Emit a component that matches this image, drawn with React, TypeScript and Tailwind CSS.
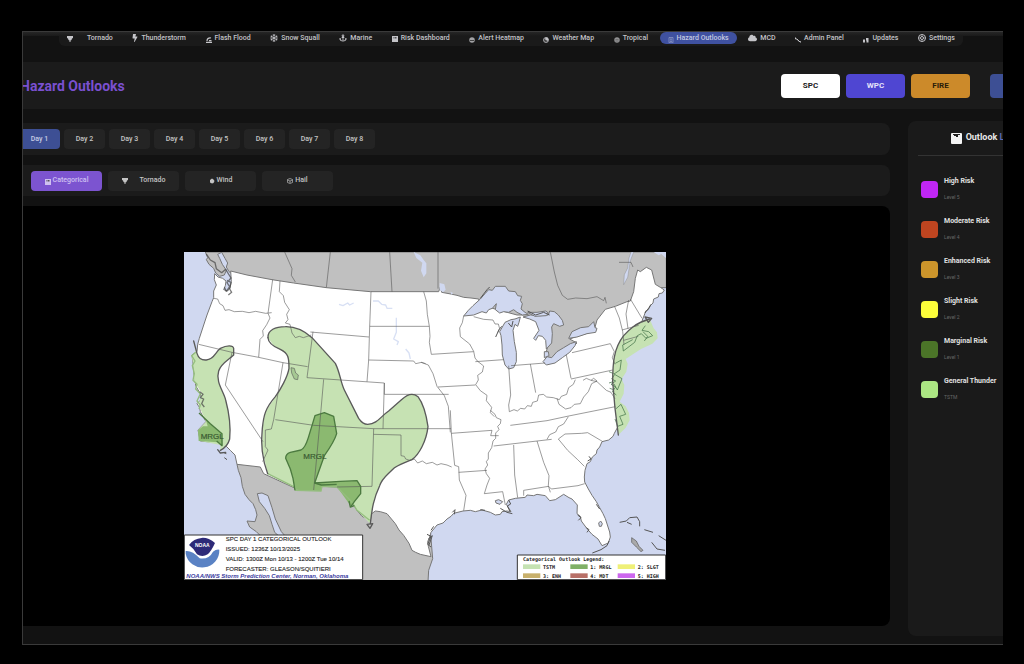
import React from 'react'
import { BsTornado } from 'react-icons/bs'
import { FaAnchor, FaBolt, FaCloud, FaRegSnowflake } from 'react-icons/fa'

type IconName =
  | 'tornado' | 'bolt' | 'flood' | 'snow' | 'anchor' | 'chart' | 'heat' | 'globe'
  | 'tropical' | 'list' | 'cloud' | 'wrench' | 'updates' | 'gear' | 'wind' | 'hail'

function Icon({ name }: { name: IconName }) {
  switch (name) {
    case 'bolt':
      return <FaBolt className="w-[6px] h-[8px]" />
    case 'snow':
      return <FaRegSnowflake className="w-2 h-2" />
    case 'anchor':
      return <FaAnchor className="w-2 h-2" />
    case 'cloud':
      return <FaCloud className="w-[9px] h-2" />
    case 'gear':
      return (
        <svg viewBox="0 0 16 16" className="w-2 h-2" fill="none" stroke="currentColor" strokeWidth="2">
          <circle cx="8" cy="8" r="7" />
          <circle cx="8" cy="8" r="3" />
          <path d="M8 1v4M8 11v4M1 8h4M11 8h4" strokeWidth="1" />
        </svg>
      )
    case 'tornado':
      return (
        <svg viewBox="0 0 12 12" className="w-[6px] h-[6px] mt-px" fill="currentColor">
          <path d="M0 0h12v4l-2 1-1 3-2 1v3H5V9L3 8 2 5 0 4z" />
        </svg>
      )
    case 'flood':
      return (
        <svg viewBox="0 0 12 12" className="w-[6px] h-[6px] mt-[3px]" fill="none" stroke="currentColor" strokeWidth="2.500">
          <path d="M0 10.500h12M2 8c0-5 4-7 8-6M6 7h5" />
        </svg>
      )
    case 'chart':
      return (
        <svg viewBox="0 0 12 12" className="w-[6px] h-[6px] mt-[2px]">
          <path d="M0 0h12v12H0z" fill="currentColor" />
          <path d="M3 2h2v3H3zM6 2h3v3H6z" fill="#333" opacity="0.8" />
        </svg>
      )
    case 'heat':
      return (
        <svg viewBox="0 0 12 12" className="w-[6px] h-[6px] mt-[3px]">
          <circle cx="6" cy="6" r="5.500" fill="currentColor" opacity="0.8" />
          <path d="M2 7h8" stroke="#222" strokeWidth="1.500" />
        </svg>
      )
    case 'globe':
      return (
        <svg viewBox="0 0 12 12" className="w-[6px] h-[6px] mt-[3px]">
          <circle cx="6" cy="6" r="5" fill="#444" stroke="currentColor" strokeWidth="1.500" />
          <path d="M5 1h4l2 4-3 4-1-3-3-1z" fill="currentColor" />
        </svg>
      )
    case 'tropical':
      return (
        <svg viewBox="0 0 12 12" className="w-[6px] h-[6px] mt-[3px]">
          <circle cx="6" cy="6" r="5.500" fill="currentColor" opacity="0.7" />
          <path d="M3 5h6M3 8h6" stroke="#555" />
        </svg>
      )
    case 'list':
      return (
        <svg viewBox="0 0 12 12" className="w-[6px] h-[6px] mt-[3px]" fill="none" stroke="currentColor" opacity="0.7">
          <path d="M2 1h8v10.500H2zM4 4h4M4 6h4M4 9h4" strokeWidth="1.300" />
        </svg>
      )
    case 'wrench':
      return (
        <svg viewBox="0 0 12 12" className="w-[6px] h-[6px] mt-[3px]" fill="none" stroke="currentColor" strokeWidth="2">
          <path d="M1 1v3h3l4 5h3v2M4 4l5 5" />
        </svg>
      )
    case 'updates':
      return (
        <svg viewBox="0 0 12 12" className="w-[6px] h-[6px] mt-[3px]" fill="currentColor">
          <path d="M0 5h4v6H0zM6 2h5v9H7V7H6z" />
        </svg>
      )
    case 'wind':
      return (
        <svg viewBox="0 0 12 12" className="w-[6px] h-[6px] mt-px" fill="currentColor">
          <path d="M6 1l3 2 2 3-2 4-3 1-4-2V4z" />
        </svg>
      )
    case 'hail':
      return (
        <svg viewBox="0 0 12 12" className="w-[6px] h-[6px] mt-px" fill="none" stroke="currentColor" strokeWidth="1.300">
          <path d="M1 3l5-2 5 2v6l-5 2-5-2zM1 4l5 2 5-2M6 6v4" />
        </svg>
      )
    default:
      return <BsTornado className="w-2 h-2" />
  }
}

const navItems: { label: string; icon: IconName; wide?: boolean; active?: boolean }[] = [
  { label: 'Tornado', icon: 'tornado', wide: true },
  { label: 'Thunderstorm', icon: 'bolt' },
  { label: 'Flash Flood', icon: 'flood' },
  { label: 'Snow Squall', icon: 'snow' },
  { label: 'Marine', icon: 'anchor' },
  { label: 'Risk Dashboard', icon: 'chart' },
  { label: 'Alert Heatmap', icon: 'heat' },
  { label: 'Weather Map', icon: 'globe' },
  { label: 'Tropical', icon: 'tropical' },
  { label: 'Hazard Outlooks', icon: 'list', active: true },
  { label: 'MCD', icon: 'cloud' },
  { label: 'Admin Panel', icon: 'wrench' },
  { label: 'Updates', icon: 'updates' },
  { label: 'Settings', icon: 'gear' },
]

const days = ['Day 1', 'Day 2', 'Day 3', 'Day 4', 'Day 5', 'Day 6', 'Day 7', 'Day 8']

const categories: { label: string; icon: IconName; wide?: boolean }[] = [
  { label: 'Categorical', icon: 'chart' },
  { label: 'Tornado', icon: 'tornado', wide: true },
  { label: 'Wind', icon: 'wind' },
  { label: 'Hail', icon: 'hail' },
]

const risks = [
  { name: 'High Risk', level: 'Level 5', color: 'bg-[#c026f5]' },
  { name: 'Moderate Risk', level: 'Level 4', color: 'bg-[#bf4520]' },
  { name: 'Enhanced Risk', level: 'Level 3', color: 'bg-[#cc952b]' },
  { name: 'Slight Risk', level: 'Level 2', color: 'bg-[#fbfd3a]' },
  { name: 'Marginal Risk', level: 'Level 1', color: 'bg-[#4b7528]' },
  { name: 'General Thunder', level: 'TSTM', color: 'bg-[#ace683]' },
]

const mapLegend = [
  { x: 1028, y: 948, label: 'TSTM', color: '#c5e2b2' },
  { x: 1170, y: 948, label: '1: MRGL', color: '#80b066' },
  { x: 1312, y: 948, label: '2: SLGT', color: '#eff078' },
  { x: 1028, y: 975, label: '3: ENH', color: '#c8b06c' },
  { x: 1170, y: 975, label: '4: MDT', color: '#b87068' },
  { x: 1312, y: 975, label: '5: HIGH', color: '#cc66ee' },
]

const canada =
  'M75 11L82 28 78 34 86 48 100 60 106 74 118 84 132 80 138 66 126 48 118 30 112 18 124 12 134 30 142 44 138 56 146 70 154 76 200 130 900 260 1098 350 1200 320 1300 260 1350 170 1440 118 1458 118V11z'

const mexico =
  'M170 648l4 18 8 22 4 26 8 24 12 16 12 12 8 18 4 16-6 20-24-2 8 18 20 14 12 12 5 30h68l-14-26-16-14-8-24-8-26-14-22-16-20-6-24 14-2 18 8 12 36 10 34 18 38 16 18 20 12 6 120h398l2-34 12-35-12-145-180-80-160-60z'

const usa =
  'M103 76L113 86 127 90 137 98 135 112 130 124 142 128 149 118 153 100 151 68 200 80 275 94 340 104 438 118 570 130 775 130 780 116 784 132 806 136 830 141 850 147 872 149 895 152 900 170 1010 200 1040 200 1058 208 1095 225 1108 270 1098 310 1098 335 1130 325 1170 300 1190 284 1168 272 1190 264 1230 252 1242 245 1250 215 1275 183 1305 174 1340 160 1350 158 1360 130 1365 90 1372 65 1380 70 1398 57 1414 65 1425 108 1440 117 1452 125 1446 134 1436 136 1434 146 1420 152 1418 164 1410 172 1404 184 1396 188 1392 200 1386 215 1384 230 1390 245 1405 243 1400 262 1385 268 1370 275 1350 285 1380 284 1345 305 1325 318 1320 345 1310 375 1302 370 1316 400 1308 420 1312 440 1308 460 1314 485 1320 506 1328 520 1310 540 1302 555 1298 564 1285 575 1265 580 1258 596 1250 605 1248 616 1236 626 1230 640 1220 646 1214 666 1212 686 1213 701 1224 722 1235 741 1248 760 1258 778 1268 796 1275 811 1288 851 1290 866 1284 884 1265 892 1253 872 1235 858 1220 841 1203 818 1200 804 1190 796 1191 770 1175 752 1166 748 1150 738 1125 754 1108 757 1095 742 1070 738 1060 742 1040 740 1035 747 1005 750 985 755 978 768 992 790 980 788 965 790 960 798 945 800 930 792 905 785 885 790 870 786 848 788 820 795 812 804 800 812 788 824 770 830 752 852 748 866 742 880 744 894 752 925 720 918 706 912 695 906 686 885 670 861 656 845 645 826 620 796 600 790 585 788 574 796 570 816 545 804 530 786 515 761 492 738 470 716 425 714 420 726 345 720 250 676 240 656 170 648 164 620 150 606 138 594 118 584 60 578 53 545 77 520 60 490 58 478 50 466 64 452 60 436 46 412 45 400 40 372 38 345 35 320 50 310 52 288 57 270 75 215 80 200 95 160 100 148 100 128 108 110 102 94z'

const stateLines =
  'M100 150l12 2 6 14 10 6 6 14 12-2 16 6 24-1 20 4 20-4 30 6 18-2M277 94l-14 101 6 14-10 20-12 18 2 16-10 10-4 54M299 98l-2 32 12 12 4 20 14 22-8 14 4 16-8 10 14 4 6 26 10 14 12-4 12 4 24-8M55 288l100 24 80 15 73 16 74 12M390 251l176 15M398 250l-18 138 232 16v34h193M572 130l-4 105-3 100-5 65M568 234h179M565 335l135 3 6 8 18-4 12 4M730 130l8 28 3 40 6 36 2 30-2 18 6 36 127-8M722 342l22 8 14 26 12 38 22 28 12 32 6 78M773 416l112-6M850 203l-4 20-8 16 2 26 28 22 12 22 4 20 8 10 18 14-4 18-14 10 2 14-8 14 14 18 20 14-2 16 16 20-4 16 12 12M885 340l84-6M880 205l30 8 28 2 6 12 10 0 4 14-6 12M985 352l6 88-6 30 2 20M992 352l102-8M1050 347l16 86M1158 320l14 70M1175 313l115-27 12 24-6 18 8 20M1172 392l125-27M987 490l14-6 10 4 10-8 12 2 8-10 12 2 4-12 14-4 4-18 14-2 10 8 20 2 18 6 6-10 16-6 6-20 14-10 6-14M1130 450l6 18 20 14 16-4 10-10 18-2 10-20 14-16 10-24 16-8-10-8-8 6-14-6-10 6M1232 396l18 4 28 26 14 6 12 20M990 531l110-14 65-14 140-28M940 593l174-20M1100 573l8-14 18-8 8-16 16-8 14-22M1134 572l20-15 50-2 18-2 44 26M1134 572l28 34 30 28 20 20M930 486l14 12 4 10 14 6-2 12-8 8 4 10-10 10 0 16-8 8-4 20-10 16 0 18-6 8 4 10-8 12 4 14 10 14-8 20-8 26M912 736l55-6 8 40M810 486l3 68 10 97 12 4 2 40 20 46-7 46M813 555l122-9-4 16h24M835 672l85-6M1000 590l3 90 9 68M1070 578l20 64 16 40-2 30 6 20M1030 742v-16l75-12 8 8 80-10 20-6M720 541h92M285 514l115 17 180 10h140M308 343l-28 171-7 28-18 3v50l8 10-16 35M155 312l-20 98 113 170M430 393l-12 137-18 195M612 404l-4 137M580 541l-5 173-105 2M580 558l82 2v62l10 2 4 8 12 4 14-4 10 12 14-6 12 8 18-4 14 8 12-4 18 4 14 6M1303 175l14 34 10 40 4 40M1345 155l-8 42 6 44M1350 152l35 58M1325 245l50-14M1330 276l44-12'

const foreignLines =
  'M313 11l22 50-2 20 12 20M450 11l-12 107M628 11l7 119M773 11v110M1110 11l12 60 10 40 14 30 16 12 24-4 34 2 30-6 20 12 4-10 4 18M1316 42h36l6 14'

const bigStorm =
  'M263 268C262 245 285 235 315 235C350 234 375 250 395 268L465 345C480 375 480 400 492 425L535 510C545 525 552 528 562 528C592 526 600 505 625 488L665 453C685 434 700 435 713 445C728 465 738 500 743 535C738 580 715 620 695 634C670 645 650 650 636 664C615 685 605 690 598 712C580 750 575 780 570 826'

const bigStormWest =
  'M263 268C264 285 280 295 300 303C325 315 326 330 326 360C322 385 300 425 285 445C255 480 250 500 246 540C240 590 245 630 262 676'

const westStorm =
  'M40 278L50 315C55 332 65 336 78 335C100 333 103 315 120 300C140 290 158 290 160 300V320C145 335 122 345 115 368C105 400 130 430 136 455C148 500 152 530 148 572Q142 595 120 606'

const eastStorm = 'M1408 212C1365 224 1345 245 1330 262C1300 300 1297 345 1297 400L1304 480 1314 560'

const marginal =
  'M344 726L338 690 330 662 316 630Q316 616 330 612L362 605Q374 600 384 568L404 502 432 493 460 504 469 556Q462 580 432 622L403 704 480 699 530 697 541 714V736L522 760 512 774'

function OutlookMap() {
  return (
    <svg
      viewBox="11 11 1446 984"
      className="w-[482px] h-[328px] shrink-0"
      role="img"
      aria-label="Day 1 outlook"
      strokeLinejoin="round"
    >
      <rect x="11" y="11" width="1446" height="984" fill="#d0d8f0" />
      <g stroke="#777" strokeWidth="3">
        <path d={canada} fill="#c0c0c0" />
        <path d={mexico} fill="#c0c0c0" />
        <path d={usa} fill="#fff" />
      </g>

      {/* lakes and inland water */}
      <g fill="#d0d8f0" stroke="#777" strokeWidth="3">
        <path d="M850 203L864 186 878 172 900 152 914 136 925 124 936 126 945 114 975 114 985 128 1005 130 1012 142 1024 144 1020 156 1026 166 1022 182 1034 192 1044 198 1026 200 1010 192 1000 184 985 192 970 190 958 194 945 184 948 166 936 180 925 184 918 194 905 190 880 200z" />
        <path d="M962 262L958 250 966 236 974 222 992 214 1004 212 1020 206 1016 222 1012 234 1004 228 998 246 1002 280 1008 312 1008 340 1000 358 985 362 974 350 966 320 965 290z" />
        <path d="M1028 206L1050 200 1080 202 1104 200 1108 188 1122 190 1134 200 1146 216 1150 230 1138 234 1120 226 1114 236 1116 256 1114 284 1098 302 1096 276 1086 264 1074 262 1066 276 1060 270 1076 246 1066 220 1048 212z" />
        <path d="M1042 192L1070 192 1096 188 1104 194 1098 202 1064 204z" />
        <path d="M1088 340L1100 325 1114 328 1130 310 1150 298 1170 286 1188 280 1184 292 1168 312 1146 328 1124 344 1098 350z" />
        <path d="M1165 270L1175 250 1201 238 1225 235 1240 220 1244 238 1250 240 1246 252 1220 256 1190 266z" />
        <path d="M1092 310l12 0 2 12-14 6z" />
        <path d="M1360 11l-10 26-8 50-12 22 2-30 10-20 4-30 6-18z" strokeWidth="1" />
        <path d="M700 11l20 10 10 14 8 10v30l-8 12-8-20 4-24-18-14z" stroke="none" />
        <path d="M778 104l14 4 4 16-8 8-10-8zM810 130l8 4-4 6z" stroke="none" />
        <path d="M1255 824l6-6 5 8-3 8h-6zM945 757l10-3 12 6-8 8-12-4z" />
        <path d="M1420 11l15 10 8-4 14 12V11z" stroke="none" />
      </g>
      <path
        d="M476 168l12 4 14-8 6 6 12-6M578 158h16l10 10 12 2 4 10 16 0M648 208v44l-8 20 14 8-4 10M676 302l10 12 4 18"
        fill="none" stroke="#d8e0f4" strokeWidth="4"
      />

      {/* outlook areas */}
      <g fill="#c6e2b3">
        <path d={bigStorm + 'L530 786 515 761 470 716 425 714 420 726 345 718 262 676L245 600 247 535 255 490 300 425 325 370 325 335 318 316 280 292z'} />
        <path d={westStorm + 'L120 590 60 578 53 545 77 520 55 470 64 435 42 400 38 345 34 322 46 312z'} />
        <path d={eastStorm + 'L1336 538 1348 516 1346 494 1336 474 1318 460 1330 436 1332 410 1324 392 1338 370 1342 346 1336 332 1360 316 1382 302 1416 286 1432 270 1430 252 1420 240z'} />
      </g>
      <g fill="#8bb970">
        <path d={marginal + 'L470 716 425 714 422 728 345 724z'} />
        <path d="M60 496L90 526 125 556 127 592 112 582 55 578 53 546 68 534 82 534 76 512z" />
      </g>
      <path
        d="M262 676l84 42 0 8 76 2 3-14 45 2 45 45 15 25 38 30M46 312l-12 10 10 16-8 14 6 24-4 20 12 12-4 14 14 14-10 22 10 12-4 12"
        fill="none" stroke="#94bd7e" strokeWidth="4"
      />

      <g fill="none" stroke="#555" strokeOpacity="0.7" strokeWidth="2.500">
        <path d={stateLines} />
        <path d={foreignLines} />
        <path d="M332 358l10 2 4 14 8 6-2 14-10-2-8-18z" fill="#a6c893" />
        <path d="M58 430l10 8-8 10 10 4-6 14 8 10M78 17l12 18 14 8 4 18 16 12 12-10 16 26-12 14 8 12-10 14-6-12M140 96l12 6-4 20 6 10-10 8" stroke="#444" strokeWidth="4" />
        <path d="M1395 232l-10 14 20 4 12 12-20 8-14-14-12 6-8 20-34 26-2-18 30-16M1388 250l14 14-10 14M1302 380l-8 12 12 6-14 10 14 8-10 14 12 10M1305 345l18-10-4 30-18 12 24 14-14 34-10-18M1306 482l16-14 14 30-18 6 10 24-16 6-8-22M1300 376l-14-6M1298 400l-12 4M1300 424l-12-4" stroke="#3f6f45" strokeWidth="3" />
      </g>
      <g fill="none" stroke="#555" strokeWidth="5">
        <path d="M985 755l6 12-10 6 8 16M960 780l20 12 16 4M900 784l14 2M816 792l8-8-2 14M752 846l8-12M744 872l12-10-10 28M1192 800l10 8-8 8M1218 838l8 6-6 8M1248 768l10 14M1236 914l26-10 18-12 6-14M1222 638l10-6-6-8M1394 194l12-16 6-10M900 150l20-26 8-8M946 266l10-22 8-10M984 224l10 12 4-18M1042 188l24 12 24-8 18 8" strokeWidth="3" />
        <path d="M740 858l12 6-10 24 10 8M1318 822l20-4 10-10 22-2 8 14v14M1340 822l14 6M1392 844l26 8M1414 882l16 20 24 4M1435 862l22 14M128 612l10 4M132 628l8 6" strokeWidth="3" />
        <path d="M1354 868l14 10 8 16 12 12-6 4-14-14-14-14z" fill="#aaa" strokeWidth="2" />
      </g>

      {/* risk contours with arrow ends */}
      <g fill="none" stroke="#5a5a5a" strokeWidth="4" strokeLinecap="round">
        <path d={bigStorm} />
        <path d={bigStormWest} />
        <path d={westStorm} />
        <path d={eastStorm} />
        <path d="M560 828l9 12 8-14zM112 604l8 10 16-2M1394 206l20 4-10 12z" />
      </g>
      <g fill="none" stroke="#4c7a40" strokeWidth="4">
        <path d={marginal} />
        <path d="M56 494l34 32 35 30v36l-16-14M506 758l4 18 12-4M403 704l20 6 46-2" />
      </g>
      <g fill="#3a5a32" stroke="#3a5a32" strokeWidth="0.600" fontFamily="'Liberation Sans', sans-serif" fontSize="24">
        <text x="61" y="572">MRGL</text>
        <text x="369" y="632">MRGL</text>
      </g>

      {/* issue box */}
      <rect x="12" y="860" width="535" height="134" fill="#fff" stroke="#333" strokeWidth="3" />
      <path d="M16 908Q36 906 58 930Q86 934 98 910Q108 902 117 904A51 51 0 0 1 16 916z" fill="#5a82c4" />
      <path d="M26 890A51 51 0 0 1 104 884Q92 910 82 918Q66 928 50 918Q40 900 26 890z" fill="#2d2a78" />
      <text x="66" y="896" textAnchor="middle" fill="#fff" fontFamily="'Liberation Sans', sans-serif" fontWeight="bold" fontSize="15">NOAA</text>
      <g fill="#222" stroke="#222" strokeWidth="0.300" fontFamily="'Liberation Sans', sans-serif" fontSize="18">
        <text x="136" y="878">SPC DAY 1 CATEGORICAL OUTLOOK</text>
        <text x="136" y="908">ISSUED: 1236Z 10/13/2025</text>
        <text x="136" y="938">VALID: 1300Z Mon 10/13 - 1200Z Tue 10/14</text>
        <text x="136" y="968">FORECASTER: GLEASON/SQUITIERI</text>
      </g>
      <text x="18" y="988" fill="#3c3ca0" fontFamily="'Liberation Sans', sans-serif" fontStyle="italic" fontWeight="bold" fontSize="18">
        NOAA/NWS Storm Prediction Center, Norman, Oklahoma
      </text>

      {/* category key */}
      <rect x="1011" y="920" width="445" height="74" fill="#fff" stroke="#333" strokeWidth="3" />
      <g fill="#222" fontFamily="'DejaVu Sans Mono', monospace" fontWeight="bold" fontSize="15">
        <text x="1028" y="938">Categorical Outlook Legend:</text>
        {mapLegend.map((k) => (
          <g key={k.label}>
            <rect x={k.x} y={k.y} width="52" height="14" fill={k.color} />
            <text x={k.x + 60} y={k.y + 13}>{k.label}</text>
          </g>
        ))}
      </g>
    </svg>
  )
}

function NavBar() {
  return (
    <div className="bg-[linear-gradient(#262626,#1a1a1a_4px,transparent_4px)]">
      <nav className="ml-9 mr-10 h-[14px] flex justify-between rounded-b-md bg-[linear-gradient(#262626,#1a1a1a_4px)]">
        {navItems.map((item) => (
          <a
            key={item.label}
            href="#"
            className={`flex h-3 items-center px-2 rounded-full text-[7px] leading-3 font-medium whitespace-nowrap ${
              item.wide ? 'gap-[14px]' : 'gap-[3px]'
            } ${item.active ? 'bg-[#3f51a0] text-[#c3c9e0]' : 'text-[#c4c4c8]'}`}
          >
            <Icon name={item.icon} />
            {item.label}
          </a>
        ))}
      </nav>
    </div>
  )
}

function Header() {
  return (
    <header className="mt-4 h-[47px] -ml-16 pl-[61px] flex items-center justify-between bg-[#1b1b1b]">
      <h1 className="text-[14px] leading-5 font-bold text-[#7a50d0]">Hazard Outlooks</h1>
      <div className="flex gap-[6px] -mr-[46px] text-[8px] font-bold">
        <button className="w-[59px] h-6 rounded bg-white text-[#222]">SPC</button>
        <button className="w-[59px] h-6 rounded bg-[#4f46d2] text-[#e4e2fa]">WPC</button>
        <button className="w-[59px] h-6 rounded bg-[#cc8a2a] text-[#2a1c08]">FIRE</button>
        <button className="w-[59px] h-6 ml-[14px] rounded bg-[#3d4f94]" aria-label="Refresh" />
      </div>
    </header>
  )
}

function RiskLegend() {
  return (
    <aside className="w-[164px] -mr-[69px] shrink-0 px-[10px] rounded-lg bg-[#1a1a1a]">
      <h2 className="h-[35px] flex items-center justify-center gap-1 border-b border-[#333] text-[9px] font-bold text-[#e8e8e8]">
        <svg viewBox="0 0 11 11" className="w-[11px] h-[11px]">
          <rect width="11" height="11" rx="1" fill="#f4f4f4" />
          <path d="M2 1h7v1H7v2H5V3H3V2H2z" fill="#222" />
        </svg>
        <span>
          Outlook <span className="text-[#5b6bb5]">Legend</span>
        </span>
      </h2>
      <ul className="mt-[13px] px-[3px]">
        {risks.map((r) => (
          <li key={r.name} className="flex h-10 items-center gap-[6px]">
            <span className={`w-[17px] h-[17px] rounded ${r.color}`} />
            <div>
              <div className="text-[7px] leading-4 font-bold text-[#e0e0e0]">{r.name}</div>
              <div className="text-[5px] leading-4 text-[#666]">{r.level}</div>
            </div>
          </li>
        ))}
      </ul>
    </aside>
  )
}

export default function App() {
  return (
    <div className="min-h-screen bg-black pt-[31px] pl-[22px] pr-[21px] pb-[18px] font-['Roboto',sans-serif]">
      <div className="overflow-hidden border-t border-l border-b border-[#3a3a3a] bg-[#121212] pb-2">
        <NavBar />
        <Header />
        <main className="mt-3 flex gap-[18px]">
          <section className="flex-1 min-w-0 -ml-16 pt-[2px] pb-[10px]">
            <div className="h-8 flex items-center gap-1 pl-[60px] rounded-lg bg-[#1b1b1b]">
              {days.map((day, i) => (
                <button
                  key={day}
                  className={`w-[41px] h-5 rounded text-[7px] font-medium ${
                    i === 0 ? 'bg-[#3d4f94] text-[#c6cce4]' : 'bg-[#242424] text-[#c4c4c4]'
                  }`}
                >
                  {day}
                </button>
              ))}
            </div>
            <div className="mt-[10px] h-[31px] flex items-center gap-[6px] pl-[72px] rounded-lg bg-[#1b1b1b]">
              {categories.map((c, i) => (
                <button
                  key={c.label}
                  className={`w-[71px] h-5 flex items-center justify-center rounded text-[7px] font-medium ${
                    c.wide ? 'gap-3' : 'gap-[2px]'
                  } ${i === 0 ? 'bg-[#7c54d0] text-[#cfc0f0]' : 'bg-[#242424] text-[#c4c4c4]'}`}
                >
                  <Icon name={c.icon} />
                  {c.label}
                </button>
              ))}
            </div>
            <div className="mt-[10px] py-[46px] flex justify-center rounded-lg bg-black">
              <OutlookMap />
            </div>
          </section>
          <RiskLegend />
        </main>
      </div>
    </div>
  )
}
